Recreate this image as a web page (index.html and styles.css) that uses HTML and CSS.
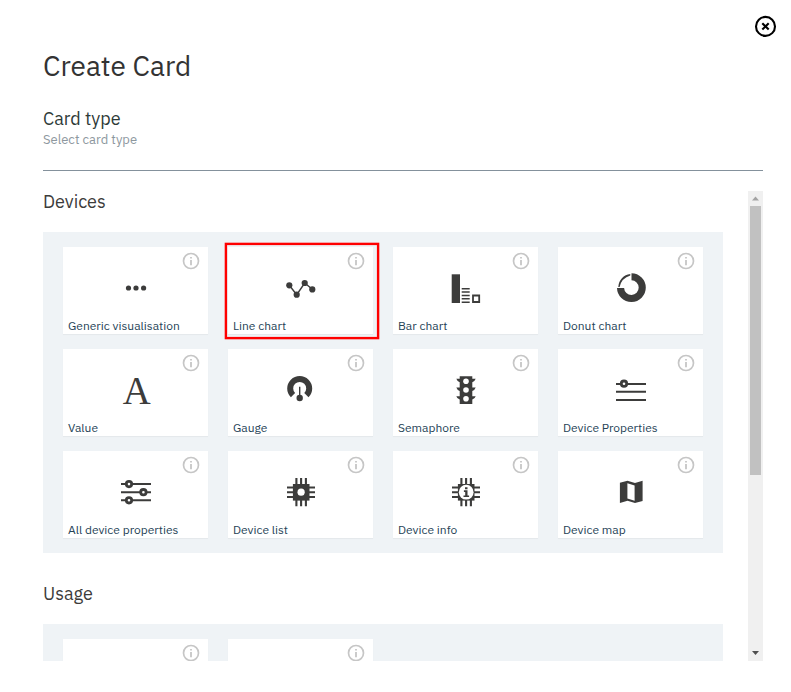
FILE: index.html
```html
<!DOCTYPE html>
<html lang="en">
<head>
<meta charset="utf-8">
<title>Create Card</title>
<link rel="stylesheet" href="styles.css">
</head>
<body>
<svg class="defs" width="0" height="0">
  <symbol id="info" viewBox="0 0 18 18">
    <circle cx="9" cy="9" r="7.5" fill="none" stroke="#c6c6c6" stroke-width="1.7"/>
    <path d="M8.1 5h1.8v1.6H8.1zM8.1 8h1.8v5.2H8.1z" fill="#c6c6c6"/>
  </symbol>
</svg>
<main class="modal">
  <button class="close" aria-label="Close"><svg width="24" height="24" viewBox="0 0 24 24" fill="none" stroke="#000"><circle cx="12.5" cy="12.4" r="9.5" stroke-width="2.1"/><path d="M9.3 9.2l6.4 6.4M15.7 9.2l-6.4 6.4" stroke-width="2.1"/></svg></button>
  <h1 class="title">Create Card</h1>
  <h2 class="step">Card type</h2>
  <p class="hint">Select card type</p>
  <div class="body">
    <div class="content">
      <section class="group">
        <h3 class="heading">Devices</h3>
        <div class="grid">
          <div class="card"><svg class="info"><use href="#info"/></svg>
            <svg class="icon" viewBox="0 0 36 36"><circle cx="10.5" cy="16" r="2.6"/><circle cx="18" cy="16" r="2.6"/><circle cx="25.6" cy="16" r="2.6"/></svg>
            <span class="label">Generic visualisation</span></div>
          <div class="card"><svg class="info"><use href="#info"/></svg>
            <svg class="icon" viewBox="0 0 36 36"><path d="M6.3 13.3l7.4 9.4 8-11.7 7.6 6.3" fill="none" stroke="#3c3c3b" stroke-width="1.4"/><circle cx="6.3" cy="13.3" r="3.1"/><circle cx="13.7" cy="22.7" r="3.1"/><circle cx="21.7" cy="11" r="3.1"/><circle cx="29.3" cy="17.4" r="3.1"/></svg>
            <span class="label">Line chart</span>
            <svg class="marker" viewBox="0 0 158 100"><rect x="2.9" y="2.9" width="152.2" height="94.2" fill="none" stroke="#f00" stroke-width="2.4"/></svg></div>
          <div class="card"><svg class="info"><use href="#info"/></svg>
            <svg class="icon" viewBox="0 0 36 36"><path d="M3.7 2.3H12V31H3.7z"/><path d="M13.7 16.7h8M13.7 20h8M13.7 23.4h8M13.7 26.8h8M13.7 30.2h8" stroke="#3c3c3b" stroke-width="1.5"/><path d="M25 23.5h6.2V30H25z" fill="none" stroke="#3c3c3b" stroke-width="1.8"/></svg>
            <span class="label">Bar chart</span></div>
          <div class="card"><svg class="info"><use href="#info"/></svg>
            <svg class="icon" viewBox="0 0 36 36"><path d="M18.5 1.2A14.4 14.4 0 1 1 4 15.9h7.1a7.3 7.3 0 1 0 7.4-7.6z"/><path d="M5.3 14.9A13.3 13.3 0 0 1 17.3 2.1v1.5A15.5 15.5 0 0 0 6.6 14.9z"/></svg>
            <span class="label">Donut chart</span></div>
          <div class="card"><svg class="info"><use href="#info"/></svg>
            <svg class="icon" viewBox="0 0 36 36"><text class="letter" x="4.8" y="30.4" textLength="28" lengthAdjust="spacingAndGlyphs">A</text></svg>
            <span class="label">Value</span></div>
          <div class="card"><svg class="info"><use href="#info"/></svg>
            <svg class="icon" viewBox="0 0 36 36"><path d="M10 21.2A9.5 9.5 0 1 1 23.4 21.2" fill="none" stroke="#3c3c3b" stroke-width="6"/><path d="M16.7 12.7V24" stroke="#3c3c3b" stroke-width="1.4"/><circle cx="16.7" cy="24" r="3.2"/></svg>
            <span class="label">Gauge</span></div>
          <div class="card"><svg class="info"><use href="#info"/></svg>
            <svg class="icon" viewBox="0 0 36 36"><path d="M11.7 2.2h12.6v2.6h3.4q-.8 2.5-3.4 3.4v5.3h3.4q-.8 2.5-3.4 3.4v5.3h3.4q-.8 2.5-3.4 3.4V30H11.7v-4.4q-2.6-.9-3.4-3.4h3.4v-5.3q-2.6-.9-3.4-3.4h3.4V8.2q-2.6-.9-3.4-3.4h3.4z"/><g fill="#fff"><circle cx="18" cy="7.3" r="2.8"/><circle cx="18" cy="16" r="2.8"/><circle cx="18" cy="24.7" r="2.8"/></g></svg>
            <span class="label">Semaphore</span></div>
          <div class="card"><svg class="info"><use href="#info"/></svg>
            <svg class="icon lines" viewBox="0 0 36 36"><path d="M3 9.9h30M3 17.8h30M3 25.9h30"/><circle cx="11" cy="9.7" r="2.7"/></svg>
            <span class="label">Device Properties</span></div>
          <div class="card"><svg class="info"><use href="#info"/></svg>
            <svg class="icon lines" viewBox="0 0 36 36"><path d="M3 8.1h30M3 16.2h30M3 24.3h30"/><circle cx="11" cy="8.1" r="2.7"/><circle cx="25.4" cy="16.2" r="2.7"/><circle cx="11" cy="24.3" r="2.7"/></svg>
            <span class="label">All device properties</span></div>
          <div class="card"><svg class="info"><use href="#info"/></svg>
            <svg class="icon" viewBox="0 0 36 36"><path d="M13.4 2v28.3M18.1 2v28.3M22.9 2v28.3M4 11.5h28M4 16.2h28M4 21h28" stroke="#3c3c3b" stroke-width="2.1"/><path d="M9.9 8h16.6v16.6H9.9z"/><circle cx="18.1" cy="16.2" r="3.6" fill="#fff"/></svg>
            <span class="label">Device list</span></div>
          <div class="card"><svg class="info"><use href="#info"/></svg>
            <svg class="icon" viewBox="0 0 36 36"><path d="M13.4 2v28.3M18.1 2v28.3M22.9 2v28.3M4 11.5h28M4 16.2h28M4 21h28" stroke="#3c3c3b" stroke-width="2.1"/><path d="M9.9 8h16.6v16.6H9.9z"/><circle cx="18.2" cy="16.2" r="7.4" fill="#fff"/><path d="M17 11.3h2.5v1.9H17zM15.9 14.3h3.6v5.1h1.6V21h-5.6v-1.6h1.7v-3.5h-1.3z"/></svg>
            <span class="label">Device info</span></div>
          <div class="card"><svg class="info"><use href="#info"/></svg>
            <svg class="icon" viewBox="0 0 36 36"><path d="M6.9 6.7l7.6-2 7.5 2.4 7.6-2.4v20.2L22 27.1l-7.5-2.4-7.6 2.4z"/><path d="M14.4 7.2l7.2 2.3v15.2l-7.2-2.3z" fill="#fff"/></svg>
            <span class="label">Device map</span></div>
        </div>
      </section>
      <section class="group">
        <h3 class="heading">Usage</h3>
        <div class="grid">
          <div class="card"><svg class="info"><use href="#info"/></svg></div>
          <div class="card"><svg class="info"><use href="#info"/></svg></div>
        </div>
      </section>
    </div>
    <div class="scrollbar">
      <svg width="15" height="15"><path d="M7.5 5.5l3.5 4H4z" fill="#a3a3a3"/></svg>
      <div class="thumb"></div>
      <svg class="down" width="15" height="15"><path d="M4 5h7L7.500 9z" fill="#505050"/></svg>
    </div>
  </div>
</main>
</body>
</html>
```
FILE: styles.css
```css
* { box-sizing: border-box; }
body { margin: 0; background: #fff; font-family: "IBM Plex Sans", Roboto, sans-serif; }
h1, h2, h3, p { margin: 0; font-weight: 400; }
.defs { position: absolute; }
.modal { position: relative; width: 791px; height: 692px; padding: 46px 28px 31px 43px; overflow: hidden; }
.close { position: absolute; left: 753px; top: 14px; width: 24px; height: 24px; padding: 0; border: 0; background: none; }
.close svg { display: block; }
.title { height: 62px; font-size: 28px; line-height: 40px; color: #333; }
.step { font-size: 18px; line-height: 22px; color: #2e3a38; }
.hint { height: 41px; font-size: 13px; line-height: 20px; color: #8d979e; border-bottom: 1px solid #84919c; }
.body { display: flex; justify-content: space-between; width: 720px; height: 470px; margin-top: 20px; overflow: hidden; }
.content { width: 680px; }
.group { margin-bottom: 30px; }
.heading { height: 41px; font-size: 18px; line-height: 21px; color: #3c3c3b; }
.grid { display: grid; grid-template-columns: repeat(4, 145px); grid-auto-rows: 87px; gap: 15px 20px; padding: 15px 20px; background: #eff3f6; }
.card { position: relative; display: flex; align-items: flex-end; padding: 0 0 1px 5px; background: #fff; box-shadow: 0 1px 1px rgba(0, 0, 0, .04); }
.info { position: absolute; right: 8px; top: 5px; width: 18px; height: 18px; }
.icon { position: absolute; left: 55px; top: 25px; width: 36px; height: 36px; fill: #3c3c3b; overflow: visible; }
.lines path { stroke: #3c3c3b; stroke-width: 2; }
.lines circle { fill: #fff; stroke: #3c3c3b; stroke-width: 2.8; }
.letter { font: 41px/1 "Liberation Serif", serif; }
.marker { position: absolute; left: -5px; top: -6px; width: 158px; height: 100px; z-index: 1; }
.label { font-size: 12px; line-height: 15px; color: #264357; white-space: nowrap; }
.scrollbar { display: flex; flex-direction: column; width: 15px; height: 470px; background: #f0f0f0; }
.scrollbar svg { display: block; flex: none; }
.thumb { width: 11px; height: 269px; margin: 0 auto; background: #c1c1c1; }
.down { margin-top: auto; }
```
